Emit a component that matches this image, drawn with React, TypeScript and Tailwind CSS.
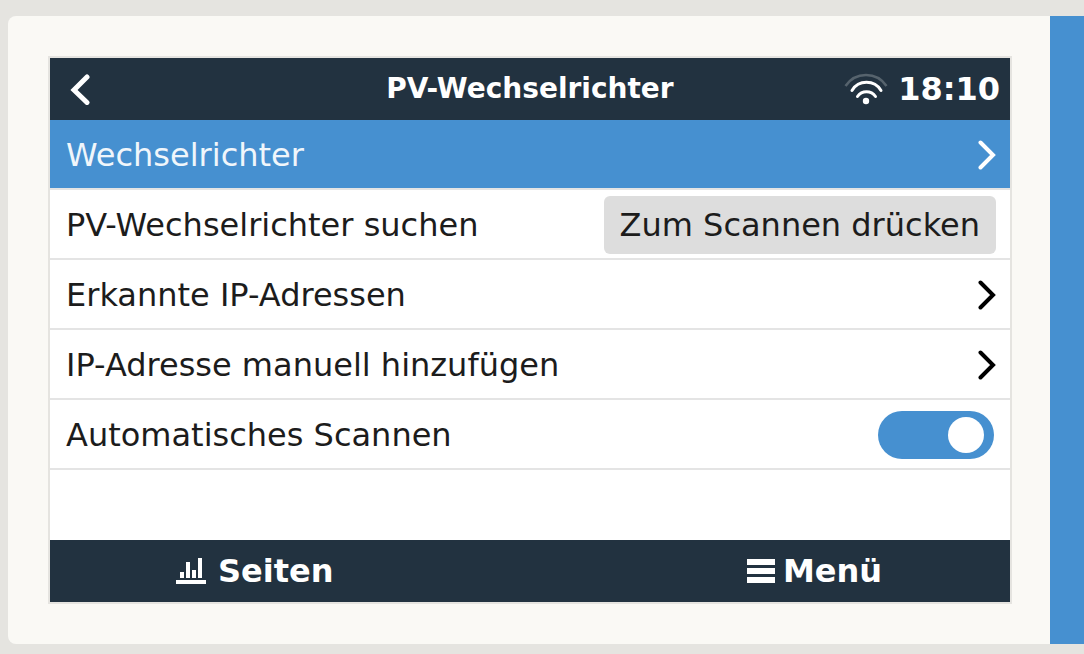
import type { ReactNode } from 'react';

type IconProps = { className?: string };

function ChevronLeft() {
  return (
    <svg width="20" height="32" viewBox="0 0 20 32" fill="none" aria-hidden="true">
      <path
        d="M17 4 4 17l13 12.500"
        stroke="currentColor"
        strokeWidth="5"
        strokeLinecap="round"
      />
    </svg>
  );
}

function ChevronRight({ className }: IconProps) {
  return (
    <svg
      className={className}
      width="18"
      height="30"
      viewBox="0 0 18 30"
      fill="none"
      aria-hidden="true"
    >
      <path
        d="M2.500 2.500 15 15 2.500 27.500"
        stroke="currentColor"
        strokeWidth="4"
        strokeLinecap="round"
      />
    </svg>
  );
}

function WifiIcon() {
  return (
    <svg width="44" height="32" viewBox="0 0 44 32" fill="none" aria-hidden="true">
      <path
        d="M1.500 13a24.500 24.500 0 0 1 41 0"
        stroke="#56636d"
        strokeWidth="2.500"
      />
      <path
        d="M8 17.500a17 17 0 0 1 29 0"
        stroke="white"
        strokeWidth="3"
        strokeLinecap="round"
      />
      <path
        d="M13.500 23.500a11 11 0 0 1 18 0"
        stroke="white"
        strokeWidth="3"
        strokeLinecap="round"
      />
      <circle cx="22" cy="28" r="3.200" fill="white" />
    </svg>
  );
}

function PagesIcon() {
  return (
    <svg width="30" height="28" viewBox="0 0 30 28" fill="currentColor" aria-hidden="true">
      <path d="M4 15h4v6H4zM10 5h4v16h-4zM16 13h4v8h-4zM22 1h4v20h-4zM0 23h30v4H0z" />
    </svg>
  );
}

function MenuIcon() {
  return (
    <svg width="28" height="24" viewBox="0 0 28 24" fill="currentColor" aria-hidden="true">
      <path d="M0 0h28v6H0zM0 9h28v6H0zM0 18h28v6H0z" />
    </svg>
  );
}

function Row({ children }: { children: ReactNode }) {
  return (
    <li className="flex h-[70px] items-center justify-between border-b-2 border-[#e4e4e4] pt-0.5 pr-3.5 pl-4">
      {children}
    </li>
  );
}

function LinkRow({ label }: { label: string }) {
  return (
    <li className="border-b-2 border-[#e4e4e4]">
      <a href="#" className="flex h-[68px] items-center justify-between pt-0.5 pr-3.5 pl-4">
        {label}
        <ChevronRight className="text-black" />
      </a>
    </li>
  );
}

export default function App() {
  return (
    <div className="flex min-h-screen items-start bg-[#e5e4e0] pt-4 pb-2.5 pl-2 font-['DejaVu_Sans',sans-serif]">
      <div className="min-w-0 flex-1 rounded-l-lg bg-[#faf9f5] py-10 pr-[38px] pl-10">
        <main className="border-2 border-[#e5e4e0] bg-white text-[32px] leading-10 text-[#1c1c1c]">
          <header className="grid h-[62px] grid-cols-[1fr_auto_1fr] items-center bg-[#223240] px-2.5 text-white">
            <button type="button" aria-label="Zurück" className="justify-self-start pl-2.5">
              <ChevronLeft />
            </button>
            <h1 className="text-[28px] font-bold">PV-Wechselrichter</h1>
            <div className="flex items-center gap-2.5 justify-self-end">
              <WifiIcon />
              <time className="font-bold">18:10</time>
            </div>
          </header>

          <ul>
            <li className="border-b-2 border-[#e4e4e4]">
              <a
                href="#"
                className="flex h-[68px] items-center justify-between bg-[#4690d0] pt-0.5 pr-3.5 pl-4 text-white"
              >
                <span className="text-[#f0f6fb]">Wechselrichter</span>
                <ChevronRight />
              </a>
            </li>
            <Row>
              <span>PV-Wechselrichter suchen</span>
              <button type="button" className="h-[58px] rounded-md bg-[#dddddd] px-4">
                Zum Scannen drücken
              </button>
            </Row>
            <LinkRow label="Erkannte IP-Adressen" />
            <LinkRow label="IP-Adresse manuell hinzufügen" />
            <Row>
              <label htmlFor="auto-scan">Automatisches Scannen</label>
              <input
                id="auto-scan"
                type="checkbox"
                defaultChecked
                className="mr-0.5 flex h-12 w-[116px] appearance-none items-center rounded-full bg-gray-300 px-2.5 before:size-9 before:rounded-full before:bg-white checked:justify-end checked:bg-[#4690d0]"
              />
            </Row>
          </ul>

          <footer className="mt-[70px] flex h-[62px] items-center justify-between bg-[#223240] pr-32 pl-[126px] font-bold text-white">
            <button type="button" className="flex items-center gap-3">
              <PagesIcon />
              Seiten
            </button>
            <button type="button" className="flex items-center gap-2">
              <MenuIcon />
              Menü
            </button>
          </footer>
        </main>
      </div>
      <div className="w-[34px] self-stretch bg-[#4690d0]" />
    </div>
  );
}
